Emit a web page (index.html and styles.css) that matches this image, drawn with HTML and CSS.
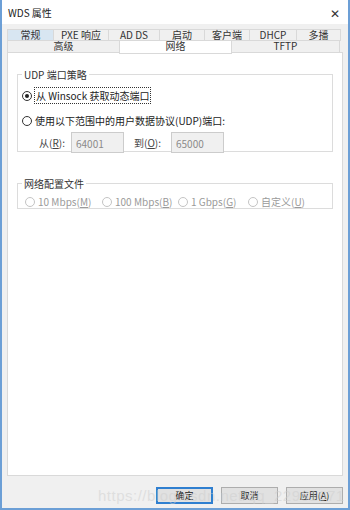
FILE: index.html
```html
<!DOCTYPE html>
<html lang="zh-CN">
<head>
    <meta charset="UTF-8">
    <title>WDS 属性</title>
    <link rel="stylesheet" href="styles.css">
</head>
<body>
    <div class="janela">
        <div class="titulo">
            <span>WDS 属性</span>
            <span class="fechar">✕</span>
        </div>
        <div class="corpo">
            <div class="abas">
                <div class="linha-abas">
                    <div class="aba ativa-foco" style="width:46px">常规</div>
                    <div class="aba" style="width:55px">PXE 响应</div>
                    <div class="aba" style="width:51px">AD DS</div>
                    <div class="aba" style="width:45px">启动</div>
                    <div class="aba" style="width:45px">客户端</div>
                    <div class="aba" style="width:47px">DHCP</div>
                    <div class="aba ultima" style="width:45px">多播</div>
                </div>
                <div class="linha-abas segunda">
                    <div class="aba" style="width:112px">高级</div>
                    <div class="aba selecionada" style="width:113px">网络</div>
                    <div class="aba ultima" style="width:109px">TFTP</div>
                </div>
            </div>
            <div class="painel">
                <fieldset class="grupo grupo-udp">
                    <legend>UDP 端口策略</legend>
                    <div class="opcao">
                        <span class="radio marcado"></span>
                        <span class="foco">从 Winsock 获取动态端口</span>
                    </div>
                    <div class="opcao">
                        <span class="radio"></span>
                        <span>使用以下范围中的用户数据协议(UDP)端口:</span>
                    </div>
                    <div class="intervalo">
                        <span class="rotulo">从(<u>R</u>):</span>
                        <span class="campo">64001</span>
                        <span class="rotulo rotulo-ate">到(<u>O</u>):</span>
                        <span class="campo">65000</span>
                    </div>
                </fieldset>
                <fieldset class="grupo grupo-rede">
                    <legend>网络配置文件</legend>
                    <div class="linha-rede">
                        <div class="opcao desativada" style="width:77px"><span class="radio"></span><span>10 Mbps(<u>M</u>)</span></div>
                        <div class="opcao desativada" style="width:76px"><span class="radio"></span><span>100 Mbps(<u>B</u>)</span></div>
                        <div class="opcao desativada" style="width:70px"><span class="radio"></span><span>1 Gbps(<u>G</u>)</span></div>
                        <div class="opcao desativada"><span class="radio"></span><span>自定义(<u>U</u>)</span></div>
                    </div>
                </fieldset>
            </div>
            <div class="botoes">
                <span class="botao padrao">确定</span>
                <span class="botao">取消</span>
                <span class="botao">应用(<u>A</u>)</span>
            </div>
            <div class="marca">https://blog.csdn.net/qq_22961671</div>
        </div>
    </div>
</body>
</html>
```

FILE: styles.css
```css
html, body {
    margin: 0;
    padding: 0;
    overflow: hidden;
}
body {
    font-family: "Noto Sans CJK SC", "Noto Sans", sans-serif;
    font-size: 10px;
    color: #1a1a1a;
    background: #ffffff;
}
.janela {
    width: 350px;
    height: 510px;
    box-sizing: border-box;
    border-left: 2px solid #6c9fd6;
    border-right: 2px solid #6c9fd6;
    border-bottom: 2px solid #6c9fd6;
    display: flex;
    flex-direction: column;
    overflow: hidden;
}
.titulo {
    height: 24px;
    background: #ffffff;
    display: flex;
    align-items: center;
    justify-content: space-between;
    padding: 0 6px 0 6px;
    font-size: 10px;
    color: #222;
}
.fechar {
    font-size: 12px;
    color: #333;
    margin-right: 2px;
}
.corpo {
    flex: 1;
    background: #f0f0f0;
    padding: 5px 5px 0 5px;
    display: flex;
    flex-direction: column;
    position: relative;
    overflow: hidden;
}
.linha-abas {
    display: flex;
    height: 12px;
}
.aba {
    box-sizing: border-box;
    height: 12px;
    border: 1px solid #d9d9d9;
    border-right: none;
    background: #f0f0f0;
    text-align: center;
    font-size: 10px;
    line-height: 10px;
    color: #333;
}
.aba.ultima {
    border-right: 1px solid #d9d9d9;
}
.aba.ativa-foco {
    background: #d8e6f2;
}
.segunda .aba {
    border-top: none;
}
.aba.selecionada {
    background: #ffffff;
    height: 13px;
    position: relative;
    z-index: 1;
    border-right: 1px solid #d9d9d9;
    margin-right: -1px;
}
.painel {
    box-sizing: border-box;
    height: 424px;
    background: #ffffff;
    border: 1px solid #d9d9d9;
    margin-top: -1px;
    padding: 14px 9px 0 9px;
}
.grupo {
    border: 1px solid #dcdcdc;
    margin: 0;
    padding: 0 0 0 4px;
}
.grupo legend {
    padding: 0 2px;
    font-size: 10px;
    color: #333;
}
.grupo-udp {
    height: 85px;
    box-sizing: border-box;
}
.grupo-rede {
    margin-top: 24px;
    height: 33px;
    box-sizing: border-box;
}
.opcao {
    display: flex;
    align-items: center;
    gap: 3px;
    height: 13px;
    font-size: 10px;
    color: #222;
}
.grupo-udp .opcao {
    margin-top: 7px;
}
.grupo-udp .opcao + .opcao {
    margin-top: 12px;
}
.radio {
    box-sizing: border-box;
    width: 10px;
    height: 10px;
    border: 1px solid #333;
    border-radius: 50%;
    background: #fff;
    display: inline-flex;
    align-items: center;
    justify-content: center;
}
.radio.marcado::after {
    content: "";
    width: 4px;
    height: 4px;
    border-radius: 50%;
    background: #222;
}
.foco {
    outline: 1px dotted #333;
    padding: 0 1px;
}
.intervalo {
    display: flex;
    align-items: center;
    margin-top: 5px;
    padding-left: 17px;
    height: 21px;
}
.rotulo {
    color: #444;
    width: 32px;
}
.rotulo-ate {
    margin-left: 10px;
    width: 37px;
}
.campo {
    box-sizing: border-box;
    width: 53px;
    height: 21px;
    border: 1px solid #cccccc;
    background: #f0f0f0;
    color: #8a8a8a;
    padding: 3px 0 0 4px;
}
.linha-rede {
    display: flex;
    margin-top: 4px;
    padding-left: 3px;
}
.desativada {
    color: #9a9a9a;
}
.desativada .radio {
    border-color: #c4c4c4;
}
.botoes {
    display: flex;
    justify-content: flex-end;
    gap: 8px;
    margin-top: 11px;
}
.botao {
    box-sizing: border-box;
    width: 57px;
    height: 17px;
    border: 1px solid #adadad;
    background: #e1e1e1;
    text-align: center;
    font-size: 9px;
    line-height: 15px;
    color: #222;
}
.botao.padrao {
    border: 2px solid #2f7fd0;
    line-height: 13px;
}
.marca {
    position: absolute;
    left: 96px;
    right: 0;
    bottom: 4px;
    font-family: "Liberation Sans", sans-serif;
    font-size: 15px;
    letter-spacing: 0.5px;
    color: rgba(205, 205, 205, 0.5);
    white-space: nowrap;
    overflow: hidden;
    pointer-events: none;
}
```
